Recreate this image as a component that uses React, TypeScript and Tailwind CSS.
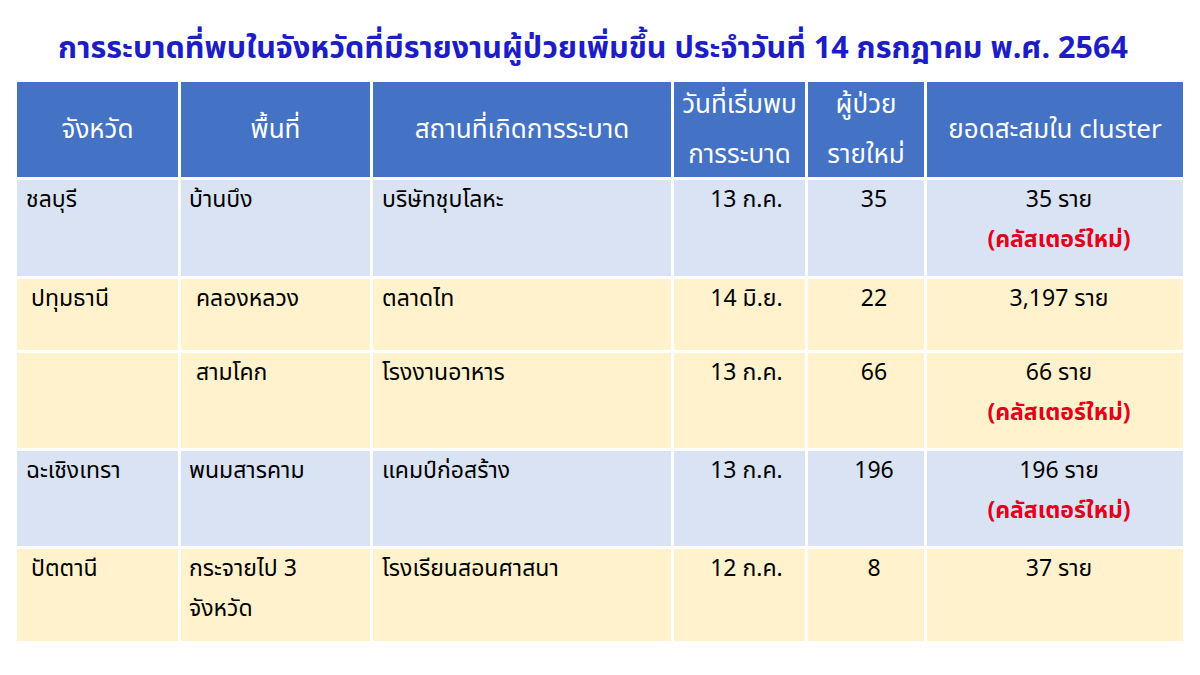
import React from "react";

const FONT = { fontFamily: '"Tahoma", "Noto Sans Thai", "Noto Sans", "DejaVu Sans", sans-serif' };

type Row = {
  bg: string;
  h: string;
  c1: string;
  c1Indent?: boolean;
  c2: React.ReactNode;
  c2Indent?: boolean;
  c3: string;
  c4: string;
  c5: string;
  c6: string;
  isNew?: boolean;
};

const rows: Row[] = [
  { bg: "bg-[#dae3f3]", h: "h-[96px]", c1: "ชลบุรี", c2: "บ้านบึง", c3: "บริษัทชุบโลหะ", c4: "13 ก.ค.", c5: "35", c6: "35 ราย", isNew: true },
  { bg: "bg-[#fff2cc]", h: "h-[71px]", c1: "ปทุมธานี", c1Indent: true, c2: "คลองหลวง", c2Indent: true, c3: "ตลาดไท", c4: "14 มิ.ย.", c5: "22", c6: "3,197 ราย" },
  { bg: "bg-[#fff2cc]", h: "h-[95px]", c1: "", c2: "สามโคก", c2Indent: true, c3: "โรงงานอาหาร", c4: "13 ก.ค.", c5: "66", c6: "66 ราย", isNew: true },
  { bg: "bg-[#dae3f3]", h: "h-[95px]", c1: "ฉะเชิงเทรา", c2: "พนมสารคาม", c3: "แคมป์ก่อสร้าง", c4: "13 ก.ค.", c5: "196", c6: "196 ราย", isNew: true },
  { bg: "bg-[#fff2cc]", h: "h-[92px]", c1: "ปัตตานี", c1Indent: true, c2: (<>กระจายไป 3<br />จังหวัด</>), c3: "โรงเรียนสอนศาสนา", c4: "12 ก.ค.", c5: "8", c6: "37 ราย" },
];

function HeaderCell({ children }: { children: React.ReactNode }) {
  return (
    <div className="bg-[#4472c4] h-[95px] flex items-center justify-center text-center text-white text-[26px] leading-[50px] overflow-hidden">
      <div className="whitespace-nowrap">{children}</div>
    </div>
  );
}

export default function App() {
  return (
    <div className="w-[1200px] h-[675px] bg-white overflow-hidden text-black" style={FONT}>
      <div className="h-[82px] flex items-center justify-center pt-[17px] pr-[14px]">
        <h1 className="text-[30.5px] font-bold text-[#1d1dc6] whitespace-nowrap">
          การระบาดที่พบในจังหวัดที่มีรายงานผู้ป่วยเพิ่มขึ้น ประจำวันที่ 14 กรกฎาคม พ.ศ. 2564
        </h1>
      </div>
      <div className="ml-[17px] grid grid-cols-[161px_189px_298px_131px_116px_256px] gap-x-[3px] gap-y-[3px] text-[23px] leading-[40px]">
        <HeaderCell>จังหวัด</HeaderCell>
        <HeaderCell>พื้นที่</HeaderCell>
        <HeaderCell>สถานที่เกิดการระบาด</HeaderCell>
        <HeaderCell>วันที่เริ่มพบ<br />การระบาด</HeaderCell>
        <HeaderCell>ผู้ป่วย<br />รายใหม่</HeaderCell>
        <HeaderCell>ยอดสะสมใน cluster</HeaderCell>
        {rows.map((r, i) => (
          <React.Fragment key={i}>
            <div className={`${r.bg} ${r.h} ${r.c1Indent ? "pl-[14px]" : "pl-[9px]"} whitespace-nowrap`}>{r.c1}</div>
            <div className={`${r.bg} ${r.h} ${r.c2Indent ? "pl-[15px]" : "pl-[8px]"} whitespace-nowrap`}>{r.c2}</div>
            <div className={`${r.bg} ${r.h} pl-[9px] whitespace-nowrap`}>{r.c3}</div>
            <div className={`${r.bg} ${r.h} pl-[14px] text-center whitespace-nowrap`}>{r.c4}</div>
            <div className={`${r.bg} ${r.h} pl-[16px] text-center`}>{r.c5}</div>
            <div className={`${r.bg} ${r.h} pl-[8px] text-center whitespace-nowrap`}>
              <div>{r.c6}</div>
              {r.isNew && <div className="text-[#e3001b] font-bold">(คลัสเตอร์ใหม่)</div>}
            </div>
          </React.Fragment>
        ))}
      </div>
    </div>
  );
}
